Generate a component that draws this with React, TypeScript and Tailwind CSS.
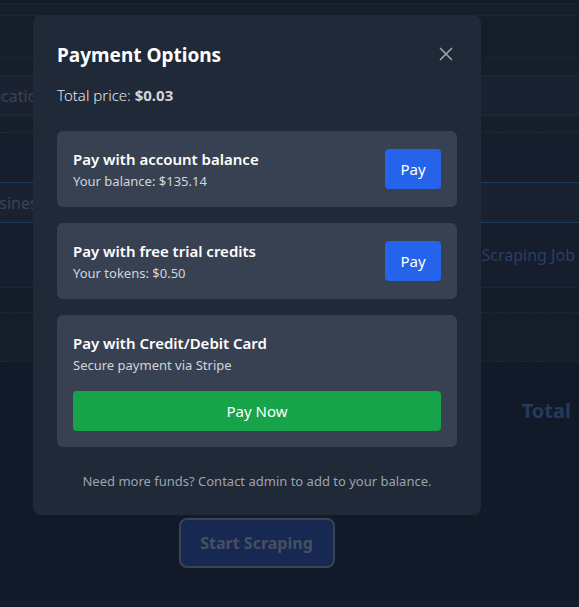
import { X } from 'lucide-react';

function Background() {
  return (
    <div className="flex h-[607px] w-full flex-col bg-[#121a29]">
      <div className="h-[3px] bg-[#131a28]" />
      <div className="h-[13px] border-y border-[#1c2433] bg-[#161d2b]" />
      <div className="h-[41px] bg-[#151c2a]" />
      <div className="flex h-[75px] flex-col border-t border-[#1c2433] bg-[#161d2b] pt-[17px]">
        <div className="flex h-[41px] items-center border-y border-[#1f2838] bg-[#1a2130] pl-2 text-[16px] text-[#3b4453]">
          <span className="-ml-[25px]">Location</span>
        </div>
      </div>
      <div className="flex h-[155px] flex-col border-t border-dashed border-[#222b3a] bg-[#161d2c]">
        <div className="h-[49px]" />
        <div className="flex h-[41px] items-center border-y border-[#1e3a5f] bg-[#1a2130] text-[16px] text-[#3b4453]">
          <span className="-ml-[21px]">Business</span>
        </div>
        <div className="flex flex-1 items-center justify-end pr-1 text-[16px] text-[#2b3f62]">
          <span>Scraping Job</span>
        </div>
      </div>
      <div className="h-[25px] border-t border-[#1d2535] bg-[#131a28]" />
      <div className="h-[50px] border-y border-dashed border-[#1f2838] bg-[#151c2a]" />
      <div className="flex h-[63px] items-end justify-end pr-[8px]">
        <span className="text-[20px] font-bold leading-7 text-[#26395a]">Total</span>
      </div>
      <div className="flex justify-center pt-[93px] pr-[66px]">
        <button className="h-[50px] w-[156px] rounded-lg border-2 border-[#3b4252] bg-[#172952] text-[16px] font-bold text-[#475063]">
          Start Scraping
        </button>
      </div>
      <div className="flex-1" />
      <div className="h-[7px] bg-[#151c2b]" />
    </div>
  );
}

function Option({ title, sub, action }: { title: string; sub: string; action?: boolean }) {
  return (
    <div className="flex items-center justify-between rounded-md bg-[#374151] p-4">
      <div>
        <div className="text-[15px] font-semibold leading-6 text-white">{title}</div>
        <div className="text-[13px] leading-5 text-[#d1d5db]">{sub}</div>
      </div>
      {action && (
        <button className="h-10 w-14 rounded bg-[#2563eb] text-[15px] text-white">Pay</button>
      )}
    </div>
  );
}

export default function App() {
  return (
    <div
      className="relative h-[607px] w-[579px] overflow-hidden"
      style={{ fontFamily: '"Noto Sans", "Open Sans", sans-serif' }}
    >
      <Background />
      <div className="absolute left-[33px] top-[15px] w-[448px] rounded-lg bg-[#1f2937] p-6">
        <div className="mb-[14px] flex items-center justify-between">
          <h2 className="pt-[2px] text-[19px] font-bold leading-7 text-white">Payment Options</h2>
          <X size={22} strokeWidth={1.8} className="text-[#9ca3af]" />
        </div>
        <p className="mb-6 text-[15px] font-light leading-6 text-[#e5e7eb]">
          Total price: <span className="font-bold text-[#d1d5db]">$0.03</span>
        </p>
        <div className="flex flex-col gap-4">
          <Option title="Pay with account balance" sub="Your balance: $135.14" action />
          <Option title="Pay with free trial credits" sub="Your tokens: $0.50" action />
          <div className="rounded-md bg-[#374151] p-4">
            <div className="text-[15px] font-semibold leading-6 text-white">Pay with Credit/Debit Card</div>
            <div className="text-[13px] leading-5 text-[#d1d5db]">Secure payment via Stripe</div>
            <button className="mt-4 h-10 w-full rounded bg-[#16a34a] text-[15px] text-white">Pay Now</button>
          </div>
        </div>
        <p className="mt-6 text-center text-[13px] leading-5 text-[#9ca3af]">
          Need more funds? Contact admin to add to your balance.
        </p>
      </div>
    </div>
  );
}
